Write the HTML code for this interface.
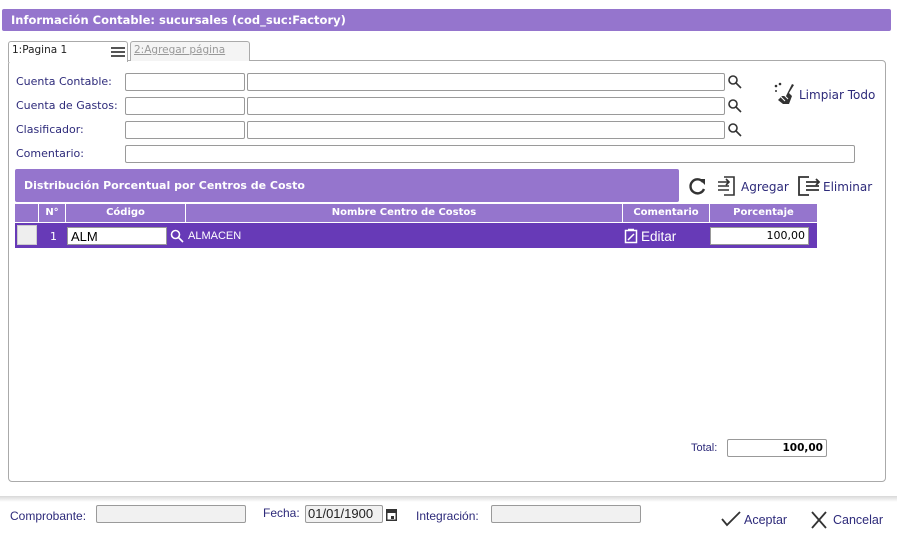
<!DOCTYPE html>
<html><head><meta charset="utf-8"><style>
*{box-sizing:border-box;margin:0;padding:0}
body{width:897px;height:539px;background:#fff;font-family:"DejaVu Sans","Liberation Sans",sans-serif;font-size:11px;color:#2d2a7a;position:relative;overflow:hidden}
.a{position:absolute}
.in{position:absolute;border:1px solid #9a9a9a;border-radius:2px;background:#fff;height:18px}
.lbl{position:absolute;font-size:11px;color:#2d2a7a}
.th{position:absolute;top:204px;height:18px;background:#9575cd;color:#fff;font-weight:bold;font-size:10px;text-align:center;line-height:18px;border-right:1px solid #fff}
.ft{position:absolute;font-family:"Liberation Sans",sans-serif;font-size:12px;color:#2d2a7a}
</style></head><body>
<div class="a" style="left:2px;top:9px;width:889px;height:22px;background:#9575cd;border-radius:2px;color:#fff;font-weight:bold;font-size:11.5px;line-height:22px;padding-left:9px">Información Contable: sucursales (cod_suc:Factory)</div>

<div class="a" style="left:8px;top:60px;width:878px;height:422px;border:1px solid #aaa;border-radius:4px"></div>
<div class="a" style="left:8px;top:41px;width:120px;height:21px;border:1px solid #aaa;border-bottom:none;border-radius:3px 3px 0 0;background:#fff;font-size:10.5px;color:#222;padding:2px 0 0 3px">1:Pagina 1
<div class="a" style="left:102px;top:5px;width:14px;height:2px;background:#555;box-shadow:0 4px 0 #555,0 8px 0 #555"></div></div>
<div class="a" style="left:130px;top:41px;width:120px;height:20px;border:1px solid #aaa;border-bottom:none;border-radius:3px 3px 0 0;background:#f4f4f4;font-size:10.5px;color:#999;text-decoration:underline;padding:2px 0 0 3px">2:Agregar página</div>

<div class="lbl" style="left:16px;top:75px">Cuenta Contable:</div>
<div class="lbl" style="left:16px;top:99px">Cuenta de Gastos:</div>
<div class="lbl" style="left:16px;top:123px">Clasificador:</div>
<div class="lbl" style="left:16px;top:147px">Comentario:</div>
<div class="in" style="left:125px;top:73px;width:120px"></div><div class="in" style="left:247px;top:73px;width:478px"></div>
<div class="in" style="left:125px;top:97px;width:120px"></div><div class="in" style="left:247px;top:97px;width:478px"></div>
<div class="in" style="left:125px;top:121px;width:120px"></div><div class="in" style="left:247px;top:121px;width:478px"></div>
<div class="in" style="left:125px;top:145px;width:730px"></div>
<svg class="a" style="left:727px;top:74px" width="16" height="64"><g fill="none" stroke="#333" stroke-width="1.6"><circle cx="6" cy="6" r="4"/><path d="M9 9l5 5"/><circle cx="6" cy="30" r="4"/><path d="M9 33l5 5"/><circle cx="6" cy="54" r="4"/><path d="M9 57l5 5"/></g></svg>

<svg class="a" style="left:773px;top:82px" width="24" height="24"><g fill="#333"><circle cx="3" cy="4" r="1.3"/><circle cx="7" cy="2" r="1.3"/><circle cx="3" cy="9" r="1"/><path d="M19 2l2 1-5 8 3 3-3 8-6 0-5-4 4-4 4 0z"/></g><path d="M8 15l4 4M11 13l4 4" stroke="#fff" stroke-width="1"/></svg>
<div class="lbl" style="left:799px;top:88px;font-size:12px">Limpiar Todo</div>

<div class="a" style="left:15px;top:169px;width:664px;height:33px;background:#9575cd;border-radius:2px;color:#fff;font-weight:bold;font-size:11px;line-height:34px;padding-left:9px">Distribución Porcentual por Centros de Costo</div>
<svg class="a" style="left:688px;top:176px" width="20" height="20"><path d="M15 6A7 7 0 1 0 16 13" fill="none" stroke="#333" stroke-width="2.4"/><path d="M11 3h6v6z" fill="#333"/></svg>
<svg class="a" style="left:716px;top:175px" width="22" height="22"><g fill="none" stroke="#333" stroke-width="1.6"><path d="M8 2h10v18H8"/><path d="M2 7h11M2 11h11M2 15h11"/><path d="M10 4l3 3-3 3" /></g></svg>
<div class="lbl" style="left:741px;top:180px;font-size:12px">Agregar</div>
<svg class="a" style="left:797px;top:175px" width="26" height="22"><g fill="none" stroke="#333" stroke-width="1.8"><path d="M12 2H2v18h10"/><path d="M9 7h13M9 11h13M9 15h13"/><path d="M19 4l3 3-3 3"/></g></svg>
<div class="lbl" style="left:823px;top:180px;font-size:12px">Eliminar</div>

<div class="th" style="left:15px;width:24px"></div>
<div class="th" style="left:39px;width:27px">N°</div>
<div class="th" style="left:66px;width:120px">Código</div>
<div class="th" style="left:186px;width:437px">Nombre Centro de Costos</div>
<div class="th" style="left:623px;width:87px">Comentario</div>
<div class="th" style="left:710px;width:107px;border-right:none">Porcentaje</div>
<div class="a" style="left:15px;top:223px;width:802px;height:25px;background:#673ab7"></div>
<div class="a" style="left:17px;top:225px;width:20px;height:20px;background:#eee;border:1px solid #ccc"></div>
<div class="a" style="left:50px;top:230px;color:#fff;font-size:11px">1</div>
<div class="a" style="left:67px;top:227px;width:100px;height:18px;background:#fff;border:1px solid #999;color:#000;font-family:'Liberation Sans',sans-serif;font-size:13px;padding-left:3px;line-height:17px">ALM</div>
<svg class="a" style="left:170px;top:229px" width="14" height="14"><g fill="none" stroke="#fff" stroke-width="1.6"><circle cx="5.5" cy="5.5" r="4"/><path d="M8.5 8.5l4.5 4.5"/></g></svg>
<div class="a" style="left:188px;top:230px;color:#fff;font-family:'Liberation Sans',sans-serif;font-size:11px">ALMACEN</div>
<svg class="a" style="left:624px;top:228px" width="14" height="16"><g fill="none" stroke="#fff" stroke-width="1.5"><rect x="1.5" y="2.5" width="11" height="12"/><path d="M4 1.5h6M4 12l6-6"/></g></svg>
<div class="a" style="left:641px;top:229px;color:#fff;font-family:'Liberation Sans',sans-serif;font-size:13.5px">Editar</div>
<div class="a" style="left:710px;top:227px;width:99px;height:18px;background:#fff;border:1px solid #999;color:#000;font-size:11px;text-align:right;padding-right:3px;line-height:16px">100,00</div>

<div class="ft" style="left:691px;top:442px;font-size:11px">Total:</div>
<div class="a" style="left:727px;top:439px;width:100px;height:18px;border:1px solid #999;border-radius:2px;color:#000;font-weight:bold;font-size:10.5px;text-align:right;padding-right:3px;line-height:16px">100,00</div>

<div class="a" style="left:0;top:496px;width:897px;height:6px;background:linear-gradient(#d8d8d8,#fff)"></div>
<div class="ft" style="left:10px;top:509px">Comprobante:</div>
<div class="in" style="left:96px;top:505px;width:150px;background:#f1f1f1"></div>
<div class="ft" style="left:263px;top:506px">Fecha:</div>
<div class="in" style="left:305px;top:505px;width:78px;background:#f1f1f1;color:#222;font-family:'Liberation Sans',sans-serif;font-size:13px;padding-left:2px;line-height:16px">01/01/1900</div>
<svg class="a" style="left:385px;top:507px" width="13" height="15"><rect x="1" y="2" width="11" height="12" fill="#333"/><rect x="2.5" y="6" width="8" height="6.5" fill="#fff"/><rect x="6" y="9" width="3" height="3" fill="#333"/></svg>
<div class="ft" style="left:416px;top:509px">Integración:</div>
<div class="in" style="left:491px;top:505px;width:150px;background:#f1f1f1"></div>
<svg class="a" style="left:721px;top:511px" width="20" height="16"><path d="M1 8l5 6L19 1" fill="none" stroke="#333" stroke-width="1.8"/></svg>
<div class="ft" style="left:744px;top:513px;font-size:12.5px">Aceptar</div>
<svg class="a" style="left:810px;top:511px" width="18" height="18"><path d="M2 1l14 16M16 1L2 17" fill="none" stroke="#333" stroke-width="1.8"/></svg>
<div class="ft" style="left:833px;top:513px;font-size:12.5px">Cancelar</div>
</body></html>
